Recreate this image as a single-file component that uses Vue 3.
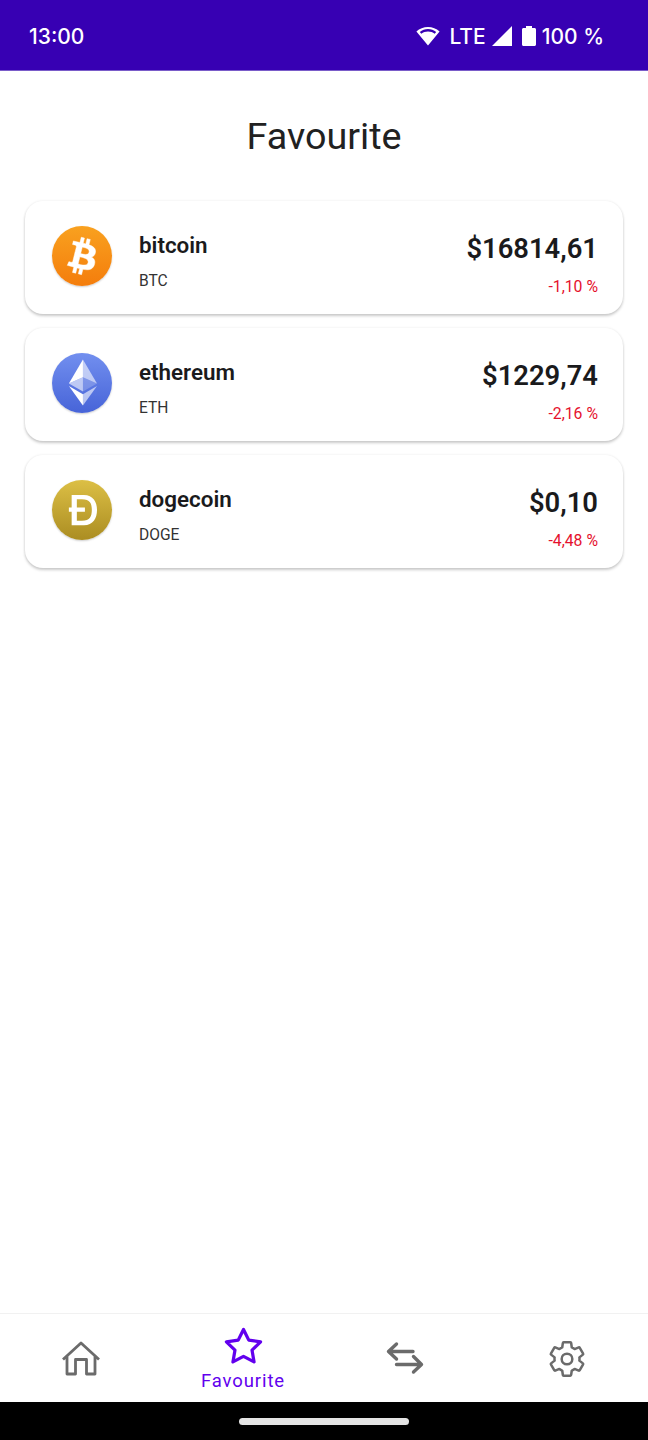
<template>
  <div class="screen">
    <header class="status-bar">
      <span class="time">13:00</span>
      <div class="status-icons">
        <svg class="wifi" width="24" height="20" viewBox="0 0 24 20">
          <path fill="#fff" fill-rule="evenodd" d="M12 19.5 0.4 5.6C3.6 2.6 7.6 1 12 1s8.400 1.600 11.600 4.600zM3.800 5.900l1.500 1.800C7.200 6.300 9.500 5.500 12 5.500s4.800.8 6.700 2.200l1.500-1.800C17.900 4 15.100 3 12 3S6.100 4 3.800 5.900z" />
        </svg>
        <span class="lte">LTE</span>
        <svg class="signal" width="20" height="20" viewBox="0 0 20 20">
          <path fill="#fff" d="M20 0v20H0z" />
        </svg>
        <svg class="battery" width="14" height="20" viewBox="0 0 14 20">
          <path fill="#fff" d="M4 0h6v2h2.500c.8 0 1.500.7 1.500 1.500V18.500c0 .8-.7 1.500-1.500 1.500h-11C.7 20 0 19.300 0 18.500V3.500C0 2.700.7 2 1.500 2H4z" />
        </svg>
        <span class="level">100 %</span>
      </div>
    </header>

    <main class="content">
      <h1 class="title">Favourite</h1>
      <ul class="coin-list">
        <li v-for="coin in coins" :key="coin.symbol" class="coin-card">
          <div class="coin-logo" :class="coin.id">
            <svg v-if="coin.id === 'bitcoin'" width="60" height="60" viewBox="0 0 32 32">
              <path fill="#fff" stroke="#fff" stroke-width=".25" d="M23.189 14.02c.314-2.096-1.283-3.223-3.465-3.975l.708-2.84-1.728-.43-.69 2.765c-.454-.114-.92-.22-1.385-.326l.695-2.783L15.596 6l-.708 2.839c-.376-.086-.746-.17-1.104-.26l.002-.009-2.384-.595-.46 1.846s1.283.294 1.256.312c.7.175.826.638.805 1.006l-.806 3.235c.048.012.11.03.18.057l-.183-.045-1.13 4.532c-.086.212-.303.531-.793.41.018.025-1.256-.313-1.256-.313l-.858 1.978 2.25.561c.418.105.828.215 1.231.318l-.715 2.872 1.727.43.708-2.84c.472.127.93.245 1.378.357l-.706 2.828 1.728.43.715-2.866c2.948.558 5.164.333 6.097-2.333.752-2.146-.037-3.385-1.588-4.192 1.13-.26 1.98-1.003 2.207-2.538zm-3.95 5.538c-.533 2.147-4.148.986-5.32.695l.95-3.805c1.172.293 4.929.872 4.37 3.11zm.535-5.569c-.487 1.953-3.495.96-4.47.717l.86-3.45c.975.243 4.118.696 3.61 2.733z" />
            </svg>
            <svg v-else-if="coin.id === 'ethereum'" width="60" height="60" viewBox="0 0 32 32">
              <g fill="#fff">
                <path fill-opacity=".6" d="M16.498 3.500v9.370l7.497 3.350z" />
                <path d="M16.498 3.500L9 16.220l7.498-3.350z" />
                <path fill-opacity=".6" d="M16.498 21.968v6.027L24 17.616z" />
                <path d="M16.498 27.995v-6.028L9 17.616z" />
                <path fill-opacity=".2" d="M16.498 20.573l7.497-4.353-7.497-3.348z" />
                <path fill-opacity=".6" d="M9 16.220l7.498 4.353v-7.701z" />
              </g>
            </svg>
            <svg v-else width="60" height="60" viewBox="0 0 32 32">
              <path fill="#fff" d="M13.248 14.61h4.314v2.286h-4.314v4.818h2.721c1.077 0 1.958-.145 2.644-.437.686-.291 1.224-.694 1.615-1.21a4.400 4.400 0 0 0 .796-1.815 11.400 11.400 0 0 0 .21-2.252 11.400 11.400 0 0 0-.21-2.252 4.396 4.396 0 0 0-.796-1.815c-.391-.516-.93-.919-1.615-1.21-.686-.292-1.567-.437-2.644-.437h-2.721v4.325zm-2.766 2.286H9v-2.285h1.482V8h6.549c1.21 0 2.257.21 3.142.627.885.418 1.607.988 2.168 1.71.56.72.977 1.565 1.25 2.532.273.967.409 2.03.409 3.19a11.600 11.600 0 0 1-.41 3.19c-.272.967-.689 1.81-1.25 2.532-.56.722-1.282 1.292-2.167 1.71-.885.418-1.933.627-3.142.627h-6.549v-7.222z" />
            </svg>
          </div>
          <div class="coin-info">
            <span class="coin-name">{{ coin.id }}</span>
            <span class="coin-symbol">{{ coin.symbol }}</span>
          </div>
          <div class="coin-price">
            <span class="price">{{ coin.price }}</span>
            <span class="change">{{ coin.change }}</span>
          </div>
        </li>
      </ul>
    </main>

    <nav class="bottom-nav">
      <div class="nav-item">
        <svg width="40" height="40" viewBox="0 0 40 40" class="nav-icon">
          <path d="M2 20.500 20 4l18 16.500M6 17v18h8.500V20.500h11V35H34V17" />
        </svg>
      </div>
      <div class="nav-item active">
        <svg width="41" height="41" viewBox="0 0 24 24" class="star">
          <polygon points="12 2 15.090 8.260 22 9.270 17 14.140 18.180 21.020 12 17.770 5.820 21.020 7 14.140 2 9.270 8.910 8.260" />
        </svg>
        <span class="nav-label">Favourite</span>
      </div>
      <div class="nav-item">
        <svg width="40" height="40" viewBox="0 0 40 40" class="nav-icon arrows">
          <path d="M11.500 5 3.500 12.500 11.500 20M3.500 12.500H28M11.500 25.500H36.500M28.500 17.500 36.500 25.500 28.500 33" />
        </svg>
      </div>
      <div class="nav-item">
        <svg width="40" height="40" viewBox="0 0 24 24" class="nav-icon gear">
          <path d="M19.430 12.980c.04-.32.07-.64.07-.98 0-.34-.03-.66-.07-.98l2.110-1.650c.19-.15.24-.42.12-.64l-2-3.460c-.09-.16-.26-.25-.44-.25-.06 0-.12.01-.17.03l-2.490 1c-.52-.4-1.080-.73-1.690-.98l-.38-2.650C14.460 2.180 14.250 2 14 2h-4c-.25 0-.46.18-.49.42l-.38 2.650c-.61.25-1.170.59-1.690.98l-2.490-1c-.06-.02-.12-.03-.18-.03-.17 0-.34.09-.43.25l-2 3.460c-.13.22-.07.49.12.64l2.110 1.650c-.04.32-.07.65-.07.98 0 .33.03.66.07.98l-2.110 1.650c-.19.15-.24.42-.12.64l2 3.460c.09.16.26.25.44.25.06 0 .12-.01.17-.03l2.490-1c.52.4 1.080.73 1.690.98l.38 2.650c.03.24.24.42.49.42h4c.25 0 .46-.18.49-.42l.38-2.650c.61-.25 1.170-.59 1.690-.98l2.490 1c.06.02.12.03.18.03.17 0 .34-.09.43-.25l2-3.460c.12-.22.07-.49-.12-.64z" />
          <circle cx="12" cy="12" r="3.200" />
        </svg>
      </div>
    </nav>

    <footer class="gesture-bar">
      <span class="home-pill"></span>
    </footer>
  </div>
</template>

<script setup>
const coins = [
  { id: 'bitcoin', symbol: 'BTC', price: '$16814,61', change: '-1,10 %' },
  { id: 'ethereum', symbol: 'ETH', price: '$1229,74', change: '-2,16 %' },
  { id: 'dogecoin', symbol: 'DOGE', price: '$0,10', change: '-4,48 %' },
];
</script>

<style>
html, body {
  margin: 0;
  background: #fff;
}
</style>

<style scoped>
.screen {
  width: 648px;
  height: 1440px;
  display: flex;
  flex-direction: column;
  font-family: Roboto, "Liberation Sans", sans-serif;
  color: #1c1c1e;
  overflow: hidden;
}

.status-bar {
  height: 71px;
  box-sizing: border-box;
  padding: 2px 44px 0 29px;
  display: flex;
  align-items: center;
  justify-content: space-between;
  background: #3700b3;
  border-bottom: 1px solid #7a5cc9;
  color: #fff;
  font-family: Inter, Roboto, sans-serif;
  font-weight: 500;
  font-size: 21px;
}
.status-icons {
  display: flex;
  align-items: center;
}
.lte { margin-left: 9px; }
.signal { margin-left: 6px; }
.battery { margin-left: 10px; }
.level { margin-left: 6px; }

.content {
  flex: 1;
  padding: 44px 25px 0;
}
.title {
  margin: 0 0 44px;
  text-align: center;
  font-size: 37.7px;
  line-height: 42px;
  font-weight: 400;
  color: #212121;
}
.coin-list {
  margin: 0;
  padding: 0;
  list-style: none;
  display: flex;
  flex-direction: column;
  gap: 14px;
}
.coin-card {
  height: 113px;
  box-sizing: border-box;
  padding: 25px 25px 0 27px;
  display: flex;
  align-items: flex-start;
  background: #fff;
  border-radius: 18px;
  box-shadow: 0 2px 3px rgba(0, 0, 0, 0.2), 0 0 3px rgba(0, 0, 0, 0.07);
}
.coin-logo {
  width: 60px;
  height: 60px;
  border-radius: 50%;
  flex-shrink: 0;
  box-shadow: 0 1px 2px rgba(0, 0, 0, 0.2);
}
.coin-logo svg { display: block; }
.bitcoin { background: linear-gradient(#f9a11f, #f47d0c); }
.ethereum { background: linear-gradient(#728fef, #4764d8); }
.dogecoin { background: linear-gradient(#dcbf45, #ab8d22); }

.coin-info {
  margin-left: 27px;
  flex: 1;
  display: flex;
  flex-direction: column;
}
.coin-name {
  margin-top: 5px;
  font-size: 22.4px;
  line-height: 28px;
  font-weight: 600;
  color: #1a1a1c;
}
.coin-symbol {
  margin-top: 13px;
  font-size: 15.6px;
  line-height: 18px;
  color: #333;
}
.coin-price {
  display: flex;
  flex-direction: column;
  align-items: flex-end;
}
.price {
  margin-top: 7px;
  font-size: 27.4px;
  line-height: 32px;
  font-weight: 600;
  color: #1a1a1c;
}
.change {
  margin-top: 13px;
  font-size: 15.8px;
  line-height: 18px;
  color: #e5112d;
}

.bottom-nav {
  height: 89px;
  box-sizing: border-box;
  display: grid;
  grid-template-columns: repeat(4, 1fr);
  border-top: 1px solid #f1f1f1;
}
.nav-item {
  display: flex;
  flex-direction: column;
  align-items: center;
  justify-content: center;
  padding-top: 2px;
}
.nav-icon {
  fill: none;
  stroke: #6b6b6b;
  stroke-width: 2.8;
  stroke-linejoin: round;
}
.arrows {
  stroke-width: 3.4;
  stroke-linecap: round;
}
.gear { stroke-width: 1.5; }
.star {
  fill: none;
  stroke: #6200ee;
  stroke-width: 1.9;
  stroke-linejoin: round;
}
.nav-label {
  margin-top: 4px;
  font-size: 18.5px;
  line-height: 21px;
  letter-spacing: 0.9px;
  color: #6200ee;
}

.gesture-bar {
  height: 38px;
  background: #000;
  display: flex;
  align-items: center;
  justify-content: center;
}
.home-pill {
  width: 170px;
  height: 7px;
  border-radius: 4px;
  background: #e4e4e4;
}
</style>
